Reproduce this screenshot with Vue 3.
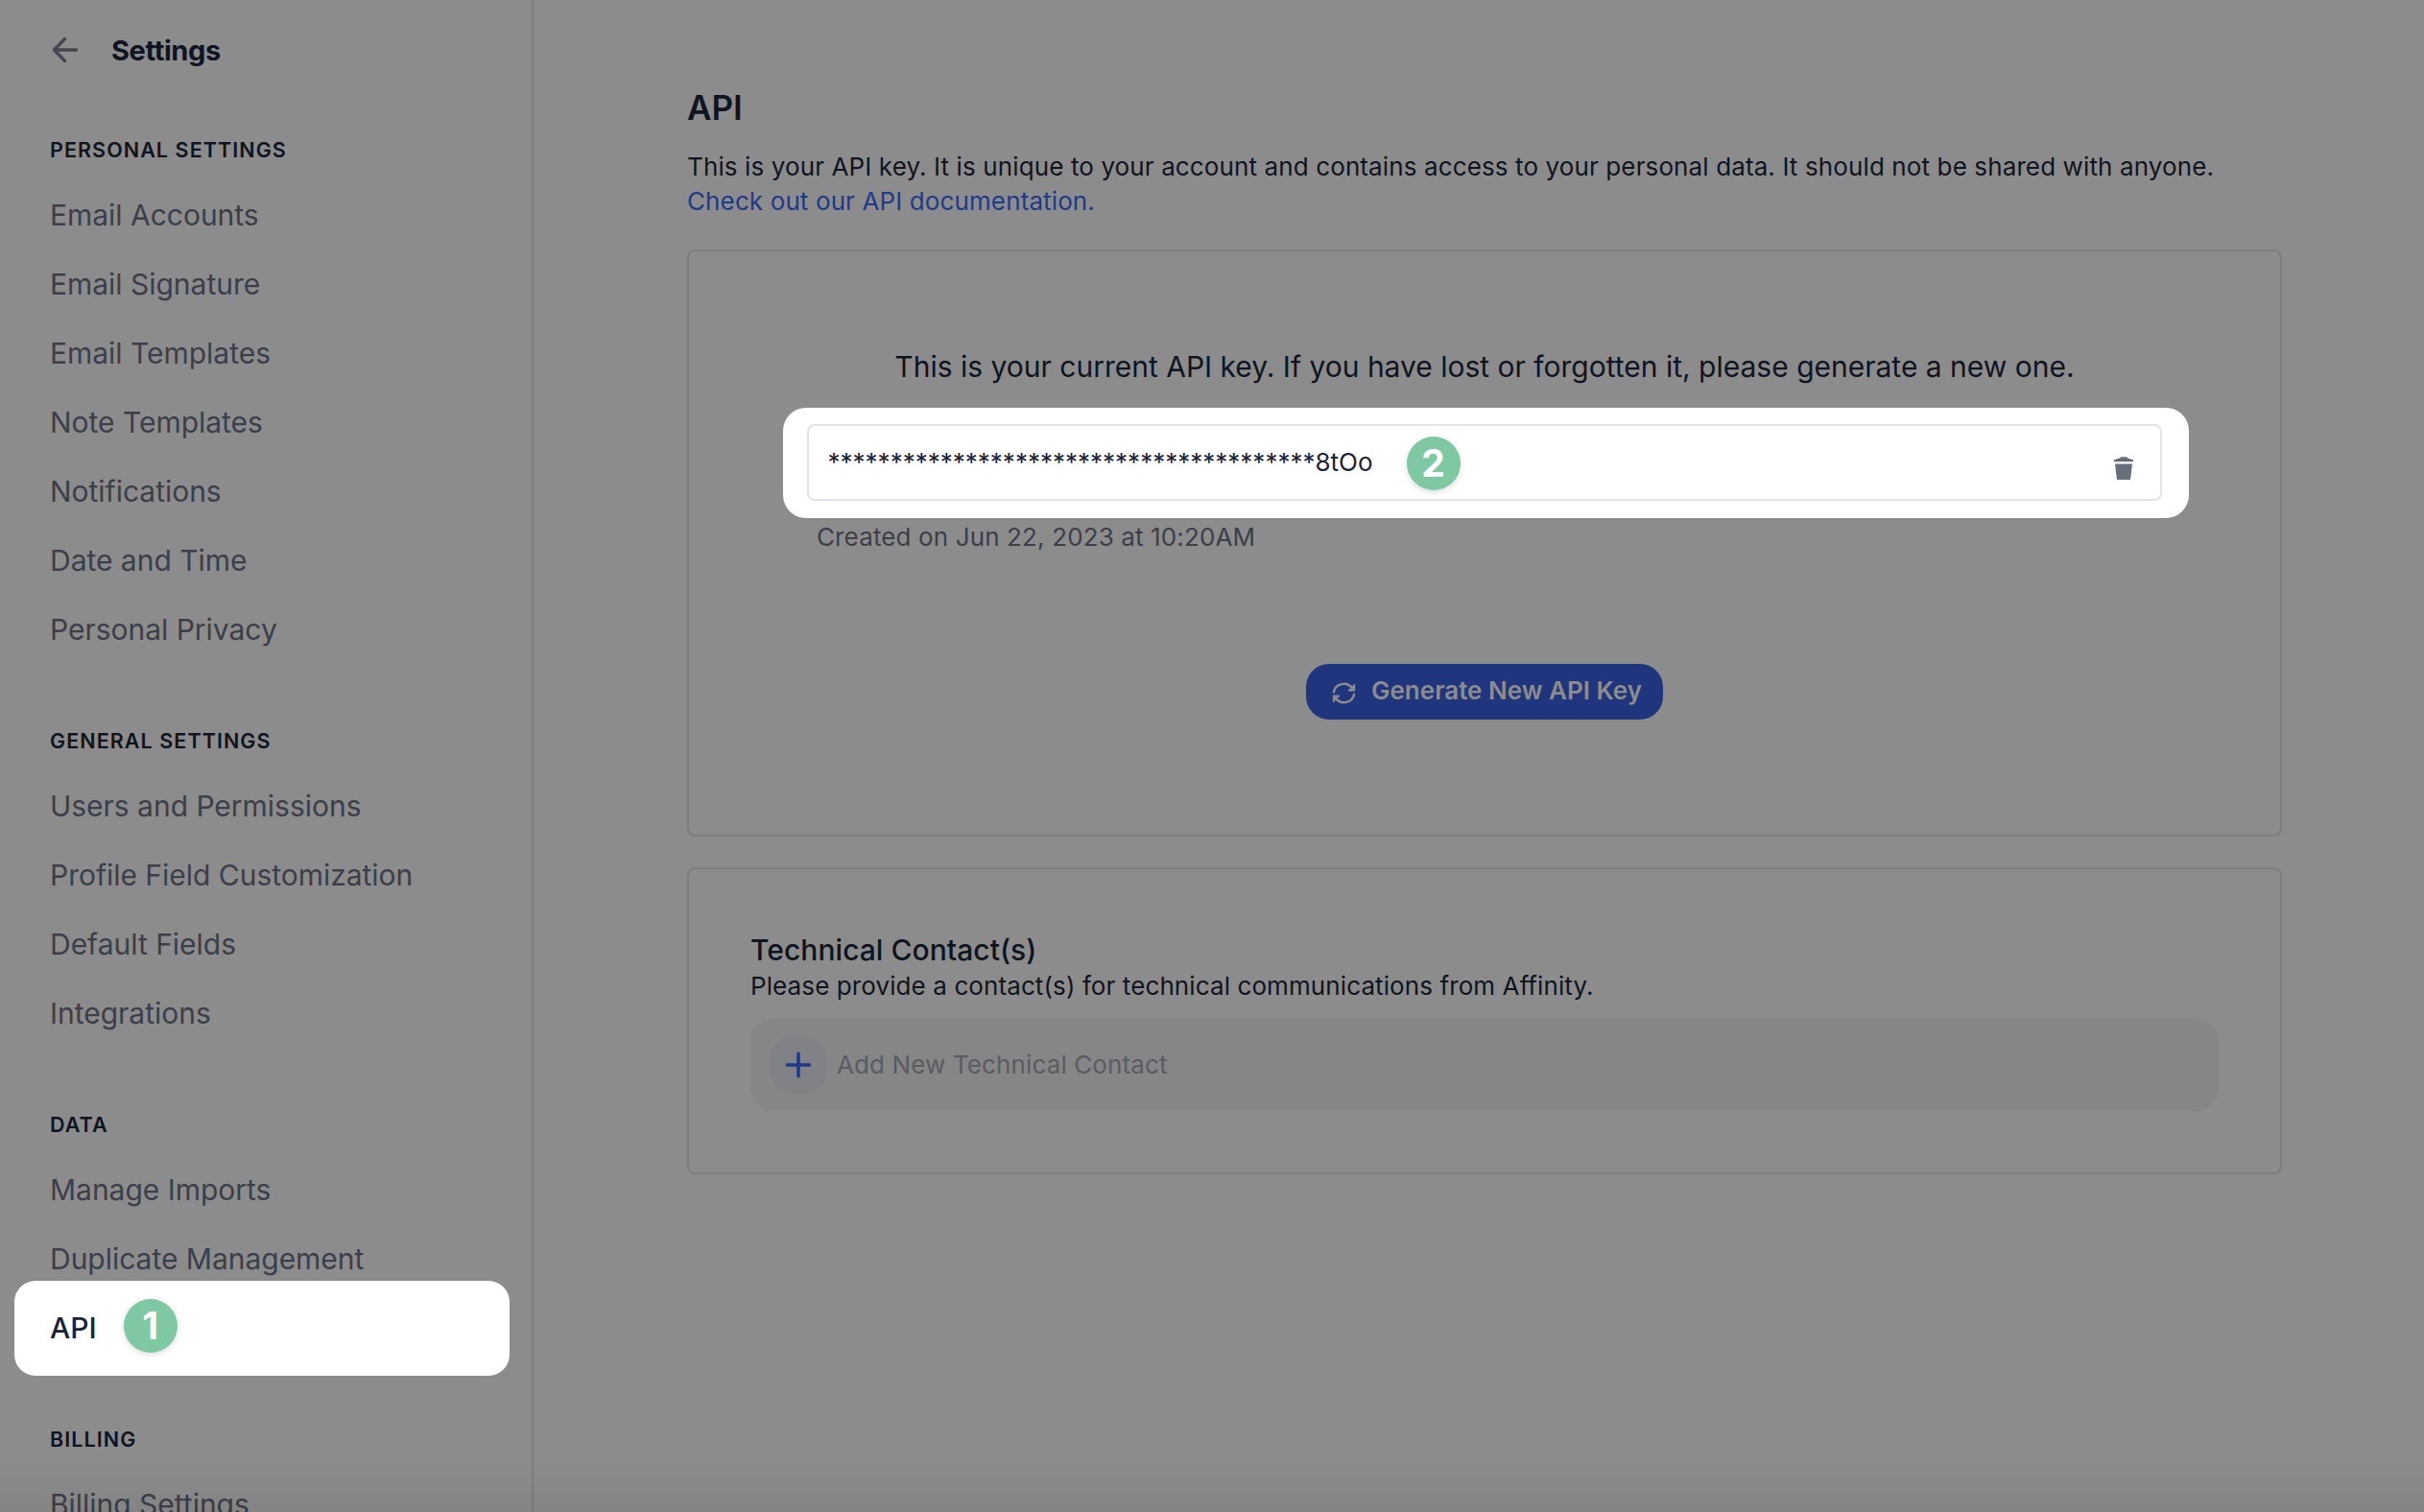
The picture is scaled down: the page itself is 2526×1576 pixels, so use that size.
<script setup>
const sections = [
  {
    title: 'Personal Settings',
    items: ['Email Accounts', 'Email Signature', 'Email Templates', 'Note Templates', 'Notifications', 'Date and Time', 'Personal Privacy'],
  },
  {
    title: 'General Settings',
    items: ['Users and Permissions', 'Profile Field Customization', 'Default Fields', 'Integrations'],
  },
  { title: 'Data', items: ['Manage Imports', 'Duplicate Management', 'API'] },
  { title: 'Billing', items: ['Billing Settings'] },
]
const active = 'API'
const maskedKey = '*'.repeat(39) + '8tOo'
</script>

<template>
  <div class="page">
    <aside class="sidebar">
      <header class="back">
        <svg class="arrow" viewBox="0 0 28 28" fill="none" stroke="currentColor" stroke-width="3.4" stroke-linecap="round" stroke-linejoin="round">
          <path d="M25.5 14H2.5M13.5 2.5L2.5 14L13.5 25.5" />
        </svg>
        <span class="back-title">Settings</span>
      </header>
      <nav>
        <section v-for="s in sections" :key="s.title" class="group">
          <h2 class="group-title">{{ s.title }}</h2>
          <a v-for="i in s.items" :key="i" class="item" :class="{ active: i === active }">
            <span class="label">{{ i }}</span>
            <span v-if="i === active" class="badge">1</span>
          </a>
        </section>
      </nav>
    </aside>

    <main class="main">
      <h1 class="title">API</h1>
      <p class="intro"><span class="intro-text">This is your API key. It is unique to your account and contains access to your personal data. It should not be shared with anyone.</span><br /><a class="link">Check out our API documentation.</a></p>

      <section class="card key-card">
        <p class="lead">This is your current API key. If you have lost or forgotten it, please generate a new one.</p>
        <div class="spotlight">
          <div class="field">
            <span class="key">{{ maskedKey }}</span>
            <span class="badge">2</span>
            <svg class="trash" viewBox="0 0 20 24" fill="currentColor">
              <path d="M0 3.2L6 1.6L7 .3H13L14 1.6L20 3.2V5.2H0Z" />
              <path d="M1 7.5H19L17 24H3Z" />
            </svg>
          </div>
        </div>
        <p class="created">Created on Jun 22, 2023 at 10:20AM</p>
        <button class="generate">
          <svg class="sync" viewBox="0 0 26 24" fill="none" stroke="currentColor" stroke-width="2.6" stroke-linecap="round" stroke-linejoin="round">
            <path d="M2 10.8A11 10.4 0 0 1 21.8 6.2" />
            <path d="M24 13.2A11 10.4 0 0 1 4.2 17.8" />
            <path fill="currentColor" stroke-width="2" d="M24.2 3.2V8.8H18.6L21.8 7.2Z" />
            <path fill="currentColor" stroke-width="2" d="M1.8 20.8V15.2H7.4L4.2 16.8Z" />
          </svg>
          <span class="generate-text">Generate New API Key</span>
        </button>
      </section>

      <section class="card contact-card">
        <h3 class="contact-title">Technical Contact(s)</h3>
        <p class="contact-text">Please provide a contact(s) for technical communications from Affinity.</p>
        <div class="add-row">
          <span class="plus">
            <svg viewBox="0 0 28 28" fill="none" stroke="currentColor" stroke-width="3.6" stroke-linecap="round">
              <path d="M14 2.4V25.6M2.4 14H25.6" />
            </svg>
          </span>
          <span class="add-text">Add New Technical Contact</span>
        </div>
      </section>
    </main>
  </div>
</template>

<style>
html,
body {
  margin: 0;
  overflow: hidden;
}
</style>

<style scoped>
.page {
  position: relative;
  display: flex;
  width: 2526px;
  height: 1576px;
  overflow: hidden;
  background: #8c8c8c;
  color: #0f1520;
  font-family: Inter, 'Liberation Sans', sans-serif;
}
/* soft shade along the bottom edge of the window */
.page::after {
  content: '';
  position: absolute;
  left: 0;
  right: 0;
  bottom: 0;
  height: 70px;
  background: linear-gradient(rgba(0, 0, 0, 0), rgba(0, 0, 0, 0.02) 50%, rgba(0, 0, 0, 0.06));
}
.page * {
  box-sizing: border-box;
}
h1, h2, h3, p {
  margin: 0;
  white-space: nowrap;
}

.sidebar {
  flex: none;
  width: 556px;
  height: 1576px;
  border-right: 2px solid #7e7e7e;
  overflow: hidden;
}
.back {
  display: flex;
  align-items: center;
  height: 104px;
  padding: 0 0 0 54px;
  gap: 34px;
}
.arrow {
  width: 28px;
  height: 28px;
  color: #44474f;
}
.back-title {
  font-size: 29px;
  font-weight: 650;
  letter-spacing: -0.4px;
}
nav {
  padding-top: 22px;
}
.group {
  margin-bottom: 50px;
}
.group-title {
  height: 62px;
  padding-left: 52px;
  line-height: 60px;
  font-size: 21.5px;
  font-weight: 600;
  letter-spacing: 1.07px;
  text-transform: uppercase;
}
.item {
  display: flex;
  align-items: center;
  height: 72px;
  padding-left: 52px;
  font-size: 30px;
  letter-spacing: -0.02px;
  color: #3b3f49;
}
.item.active {
  height: 99px;
  margin: -13px 23px -14px 15px;
  padding: 0 0 4px 37px;
  gap: 28px;
  border-radius: 22px;
  background: #fff;
  color: #1b2437;
  font-weight: 500;
}
.active .label {
  padding-top: 2px;
}
.badge {
  display: flex;
  align-items: center;
  justify-content: center;
  flex: none;
  width: 56px;
  height: 56px;
  padding-bottom: 1px;
  border-radius: 50%;
  background: #7ec8a4;
  color: #fff;
  font-size: 39px;
  font-weight: 700;
  line-height: 55px;
  box-shadow: 0 2px 6px rgba(0, 0, 0, 0.14);
}
.active .badge {
  margin-bottom: 1px;
}

.main {
  width: 1662px;
  margin-left: 160px;
  padding-top: 90px;
}
.title {
  height: 44px;
  line-height: 44px;
  font-size: 35px;
  font-weight: 600;
}
.intro {
  margin-top: 22px;
  font-size: 26px;
  line-height: 36px;
  letter-spacing: 0.118px;
}
.link {
  color: #1f3a8a;
}
.card {
  display: flex;
  flex-direction: column;
  border: 2px solid #7e7e7e;
  border-radius: 8px;
}
.key-card {
  height: 612px;
  margin-top: 32px;
  align-items: center;
}
.lead {
  margin-top: 100px;
  font-size: 30px;
  line-height: 40px;
}
.spotlight {
  width: 1465px;
  height: 115px;
  margin: 23px 0 0 2px;
  padding: 17px 28px 0 25px;
  border-radius: 24px;
  background: #fff;
}
.field {
  display: flex;
  align-items: center;
  height: 80px;
  padding: 0 28px 0 20px;
  border: 2px solid #e2e2e8;
  border-radius: 8px;
}
.key {
  width: 603px;
  padding-bottom: 2px;
  font-size: 26px;
  color: #1b2437;
}
.field .badge {
  margin-top: 2px;
}
.trash {
  width: 20px;
  height: 24px;
  margin: 12px 0 0 auto;
  color: #676d79;
}
.created {
  align-self: flex-start;
  margin: 2px 0 0 133px;
  font-size: 26px;
  line-height: 36px;
  letter-spacing: 0.13px;
  color: #3b3f49;
}
.generate {
  display: flex;
  align-items: center;
  width: 372px;
  height: 58px;
  margin-top: 114px;
  padding: 0 0 0 27px;
  gap: 16px;
  border: 0;
  border-radius: 24px;
  background: #1f367f;
  color: #8c8c8c;
  font-family: inherit;
  font-size: 26px;
  font-weight: 600;
  white-space: nowrap;
}
.generate-text {
  padding-bottom: 3px;
}
.sync {
  flex: none;
  width: 25px;
  height: 23px;
  margin-top: 3px;
}
.contact-card {
  height: 320px;
  margin-top: 32px;
  padding: 65px 64px 0 64px;
}
.contact-title {
  font-size: 30px;
  line-height: 38px;
  font-weight: 500;
  letter-spacing: 0.05px;
}
.contact-text {
  margin-top: 1px;
  font-size: 26px;
  line-height: 36px;
  letter-spacing: 0.1px;
}
.add-row {
  display: flex;
  align-items: center;
  height: 96px;
  margin-top: 16px;
  padding-left: 20px;
  gap: 10px;
  border-radius: 24px;
  background: #868686;
}
.plus {
  display: flex;
  align-items: center;
  justify-content: center;
  width: 60px;
  height: 60px;
  border-radius: 24px;
  background: #808286;
  color: #1f3a8a;
}
.plus svg {
  width: 28px;
  height: 28px;
}
.add-text {
  padding-bottom: 1px;
  font-size: 26px;
  letter-spacing: 0.12px;
  color: #595c63;
}
</style>
